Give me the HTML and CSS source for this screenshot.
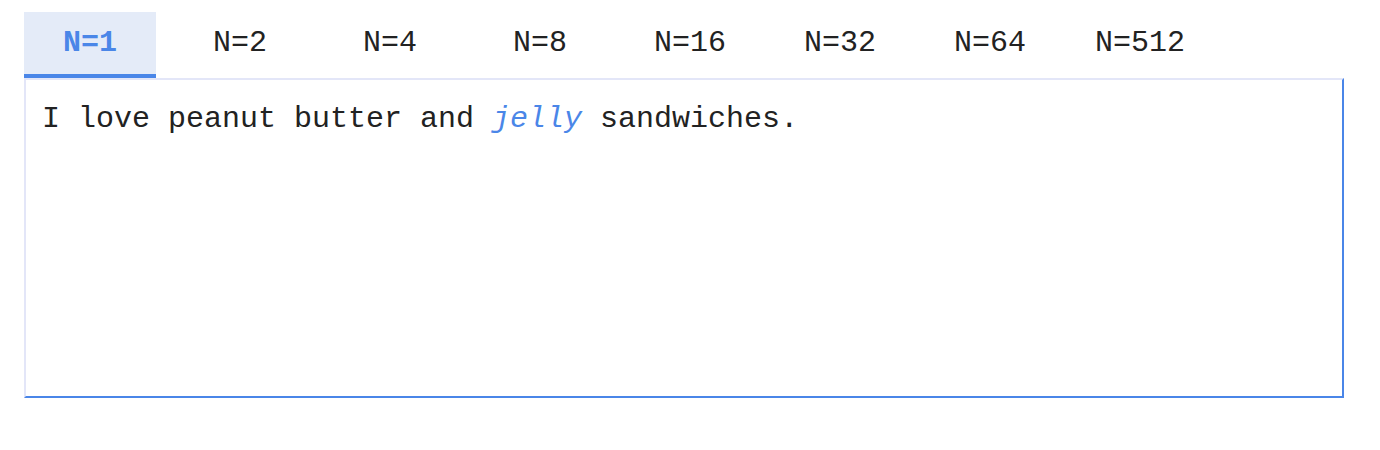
FILE: index.html
```html
<!DOCTYPE html>
<html>
<head>
<meta charset="utf-8">
<link rel="stylesheet" href="styles.css">
</head>
<body>
<div class="widget">
  <div class="tabs">
    <div class="tab active">N=1</div>
    <div class="tab">N=2</div>
    <div class="tab">N=4</div>
    <div class="tab">N=8</div>
    <div class="tab">N=16</div>
    <div class="tab">N=32</div>
    <div class="tab">N=64</div>
    <div class="tab">N=512</div>
  </div>
  <div class="panel">
    <p class="sample">I love peanut butter and <em class="hl">jelly</em> sandwiches.</p>
  </div>
</div>
</body>
</html>
```
FILE: styles.css
```css
html, body {
  margin: 0;
  padding: 0;
  background: #ffffff;
}
body {
  padding: 12px 0 0 24px;
  font-family: "Courier New", "Nimbus Mono PS", "Nimbus Mono L", "FreeMono", "Courier", "Liberation Mono", monospace;
  font-size: 30px;
  color: #222222;
}
.widget {
  width: 1320px;
}
.tabs {
  display: flex;
  gap: 18px;
}
.tab {
  width: 132px;
  height: 62px;
  border-bottom: 4px solid transparent;
  display: flex;
  align-items: center;
  justify-content: center;
  color: #222222;
}
.tab.active {
  background: #e4ebf8;
  color: #4a86e8;
  font-weight: bold;
  border-bottom-color: #4a86e8;
}
.panel {
  height: 316px;
  border-top: 2px solid #e3e6f8;
  border-left: 2px solid #e3e6f8;
  border-right: 2px solid #4a86e8;
  border-bottom: 2px solid #4a86e8;
  padding: 0 16px;
}
.sample {
  margin: 22px 0 0 0;
  line-height: 34px;
}
.hl {
  color: #4a86e8;
  font-style: italic;
}
```
